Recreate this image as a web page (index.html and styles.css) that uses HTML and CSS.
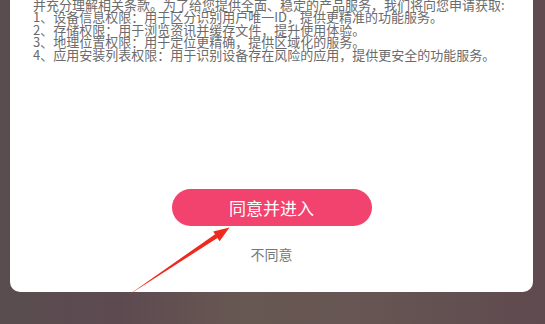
FILE: index.html
```html
<!DOCTYPE html>
<html lang="zh-CN">
<head>
<meta charset="utf-8">
<link rel="stylesheet" href="styles.css">
</head>
<body>
<div class="screen">
  <div class="card">
    <div class="terms">
      <p>并充分理解相关条款。为了给您提供全面、稳定的产品服务，我们将向您申请获取:</p>
      <p>1、设备信息权限：用于区分识别用户唯一ID，提供更精准的功能服务。</p>
      <p>2、存储权限：用于浏览资讯并缓存文件，提升使用体验。</p>
      <p>3、地理位置权限：用于定位更精确，提供区域化的服务。</p>
      <p>4、应用安装列表权限：用于识别设备存在风险的应用，提供更安全的功能服务。</p>
    </div>
    <div class="actions">
      <button class="agree">同意并进入</button>
      <span class="disagree">不同意</span>
    </div>
  </div>
  <svg class="arrow" width="545" height="324" viewBox="0 0 545 324">
    <polygon points="127,296 216.2,233.4 218.6,237.2" fill="#ee2a1f"/>
    <polygon points="229.5,227.5 213.2,231.6 219.6,241.2" fill="#ee2a1f"/>
  </svg>
</div>
</body>
</html>
```

FILE: styles.css
```css
html, body {
  margin: 0;
  padding: 0;
}
body {
  width: 545px;
  height: 324px;
  overflow: hidden;
  background: linear-gradient(90deg, #594d4f 0%, #5d4a51 22%, #685852 45%, #665553 68%, #5f4a4f 100%);
  font-family: "Noto Sans CJK SC", "Noto Sans", sans-serif;
}
.screen {
  position: relative;
  display: flow-root;
  width: 545px;
  height: 324px;
}
.card {
  margin: -20px 12px 0 10px;
  padding: 19px 0 28px;
  background: #fff;
  border-radius: 10px;
  display: flex;
  flex-direction: column;
}
.terms {
  padding-left: 23px;
  color: #6b6b6b;
  font-size: 13px;
  line-height: 12.4px;
}
.terms p {
  margin: 0;
  white-space: nowrap;
}
.actions {
  margin-top: 128px;
  display: flex;
  flex-direction: column;
  align-items: center;
}
.agree {
  width: 200px;
  height: 37px;
  border: none;
  border-radius: 19px;
  background: #f2436e;
  color: #fff;
  font-family: "Noto Sans CJK SC", sans-serif;
  font-size: 17px;
  line-height: 37px;
  padding: 0;
}
.disagree {
  margin-top: 18px;
  color: #777;
  font-size: 14px;
  line-height: 20px;
}
.arrow {
  position: absolute;
  left: 0;
  top: 0;
  pointer-events: none;
}
```
